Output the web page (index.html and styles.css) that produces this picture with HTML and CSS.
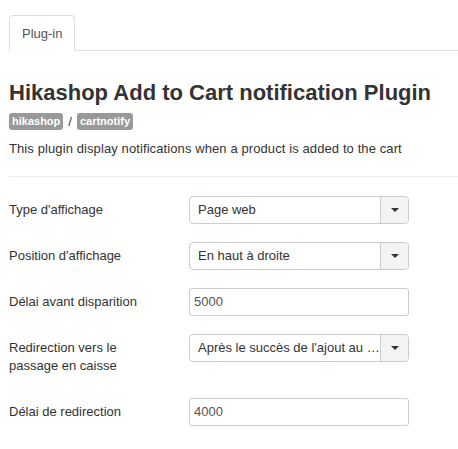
FILE: index.html
```html
<!DOCTYPE html>
<html>
<head>
<meta charset="utf-8">
<link rel="stylesheet" href="styles.css">
</head>
<body>
<div class="page">
  <ul class="tabs">
    <li class="tab active">Plug-in</li>
  </ul>
  <h1 class="title">Hikashop Add to Cart notification Plugin</h1>
  <div class="badges">
    <span class="badge">hikashop</span>
    <span class="sep">/</span>
    <span class="badge">cartnotify</span>
  </div>
  <p class="desc">This plugin display notifications when a product is added to the cart</p>
  <hr class="rule">
  <div class="form">
    <div class="group">
      <label class="label">Type d'affichage</label>
      <div class="control">
        <div class="select"><span class="select-text">Page web</span><span class="select-btn"><span class="caret"></span></span></div>
      </div>
    </div>
    <div class="group">
      <label class="label">Position d'affichage</label>
      <div class="control">
        <div class="select"><span class="select-text">En haut à droite</span><span class="select-btn"><span class="caret"></span></span></div>
      </div>
    </div>
    <div class="group">
      <label class="label">Délai avant disparition</label>
      <div class="control">
        <div class="input">5000</div>
      </div>
    </div>
    <div class="group">
      <label class="label">Redirection vers le passage en caisse</label>
      <div class="control">
        <div class="select"><span class="select-text">Après le succès de l'ajout au …</span><span class="select-btn"><span class="caret"></span></span></div>
      </div>
    </div>
    <div class="group">
      <label class="label">Délai de redirection</label>
      <div class="control">
        <div class="input">4000</div>
      </div>
    </div>
  </div>
</div>
</body>
</html>
```
FILE: styles.css
```css
* { box-sizing: border-box; }
html, body { margin: 0; padding: 0; background: #fff; }
body {
  font-family: "Liberation Sans", Arial, sans-serif;
  font-size: 13px;
  line-height: 18px;
  color: #333;
}
.page { padding: 15px 0 0 9px; }
.tabs {
  list-style: none;
  margin: 0;
  padding: 0;
  display: flex;
  border-bottom: 1px solid #ddd;
}
.tab {
  padding: 9px 12px 8px 12px;
  color: #555;
  border: 1px solid #ddd;
  border-bottom-color: transparent;
  border-radius: 4px 4px 0 0;
  margin-bottom: -1px;
  background: #fff;
  height: 36px;
}
.title {
  margin: 29px 0 0 0;
  font-size: 22px;
  line-height: 26px;
  font-weight: bold;
  color: #333;
  white-space: nowrap;
}
.badges {
  margin-top: 7px;
  display: flex;
  align-items: center;
  height: 17px;
}
.badge {
  display: inline-block;
  background: #999;
  color: #fff;
  font-size: 11px;
  font-weight: bold;
  line-height: 17px;
  height: 17px;
  padding: 0 3px;
  border-radius: 3px;
}
.sep { margin: 0 5px; color: #333; font-size: 13px; }
.desc { margin: 10px 0 0 0; letter-spacing: 0.1px; }
.rule {
  margin: 18px 0 0 0;
  border: 0;
  border-top: 1px solid #eee;
  height: 0;
}
.form { margin-top: 19px; }
.group {
  display: grid;
  grid-template-columns: 180px 220px;
  margin-bottom: 18px;
}
.label {
  padding: 5px 20px 5px 0;
  color: #333;
}
.select {
  display: flex;
  height: 28px;
  border: 1px solid #ccc;
  border-radius: 4px;
  overflow: hidden;
  background: #fff;
}
.select-text {
  flex: 1;
  min-width: 0;
  padding: 4px 0 4px 8px;
  white-space: nowrap;
  overflow: hidden;
  color: #333;
}
.select-btn {
  width: 28px;
  flex: none;
  border-left: 1px solid #ccc;
  background: #f3f3f3;
  display: flex;
  align-items: center;
  justify-content: center;
}
.caret {
  width: 0;
  height: 0;
  border-left: 4px solid transparent;
  border-right: 4px solid transparent;
  border-top: 4px solid #333;
}
.input {
  height: 28px;
  border: 1px solid #ccc;
  border-radius: 3px;
  padding: 4px 4px;
  color: #555;
}
```
